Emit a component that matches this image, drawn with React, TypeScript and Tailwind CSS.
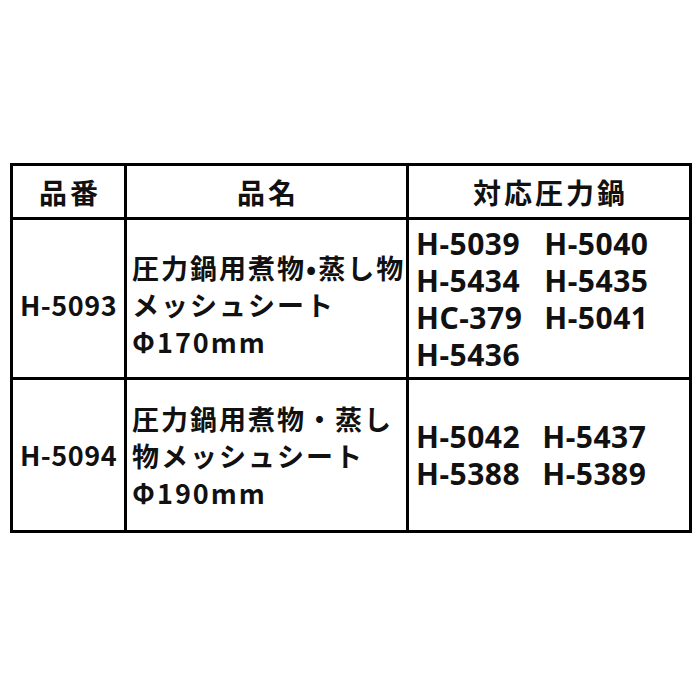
import React from 'react';

const font = { fontFamily: '"Noto Sans CJK JP", "Noto Sans", sans-serif' };
const latin = { fontFamily: '"Noto Sans", "Noto Sans CJK JP", sans-serif' };

interface ProductRow {
  code: string;
  name: string[];
  models: string[];
  nameClass?: string;
  codeClass?: string;
}

const rows: ProductRow[] = [
  {
    code: 'H-5093',
    name: ['圧力鍋用煮物•蒸し物', 'メッシュシート', 'Φ170mm'],
    models: ['H-5039', 'H-5040', 'H-5434', 'H-5435', 'HC-379', 'H-5041', 'H-5436'],
    nameClass: 'pt-[12px]',
    codeClass: 'pt-[14px]',
  },
  {
    code: 'H-5094',
    name: ['圧力鍋用煮物・蒸し', '物メッシュシート', 'Φ190mm'],
    models: ['H-5042', 'H-5437', 'H-5388', 'H-5389'],
  },
];

export default function App() {
  return (
    <div className="w-[700px] h-[700px] bg-white text-[#111]" style={font}>
      <div className="pt-[163px] pl-[10px]">
        <table className="border-collapse w-[679px] table-fixed">
          <colgroup>
            <col className="w-[114px]" />
            <col className="w-[282px]" />
            <col className="w-[283px]" />
          </colgroup>
          <thead>
            <tr className="h-[54px]">
              <th className="border-[3px] border-black text-[28px] font-bold leading-none tracking-[3px] pl-[3px]">品番</th>
              <th className="border-[3px] border-black text-[28px] font-bold leading-none tracking-[3px] pl-[3px]">品名</th>
              <th className="border-[3px] border-black text-[28px] font-bold leading-none tracking-[3px] pl-[3px]">対応圧力鍋</th>
            </tr>
          </thead>
          <tbody>
            {rows.map((row, i) => (
              <tr key={row.code} className={i === 0 ? 'h-[160px]' : 'h-[153px]'}>
                <td className={`border-[3px] border-black text-center align-middle text-[27px] font-bold tracking-[0.5px] whitespace-nowrap ${row.codeClass ?? ''}`}>
                  {row.code}
                </td>
                <td className={`border-[3px] border-black align-middle pl-[5px] ${row.nameClass ?? ''}`}>
                  {row.name.map((line) => (
                    <div key={line} className="text-[27px] font-bold leading-[37px] tracking-[2px] whitespace-nowrap">
                      {line}
                    </div>
                  ))}
                </td>
                <td className="border-[3px] border-black align-middle pl-[7px]">
                  <div className="grid grid-cols-[auto_auto] justify-start gap-x-[22px]" style={latin}>
                    {row.models.map((m) => (
                      <span key={m} className="text-[30px] font-bold leading-[37px] tracking-[0.5px] whitespace-nowrap">
                        {m}
                      </span>
                    ))}
                  </div>
                </td>
              </tr>
            ))}
          </tbody>
        </table>
      </div>
    </div>
  );
}
